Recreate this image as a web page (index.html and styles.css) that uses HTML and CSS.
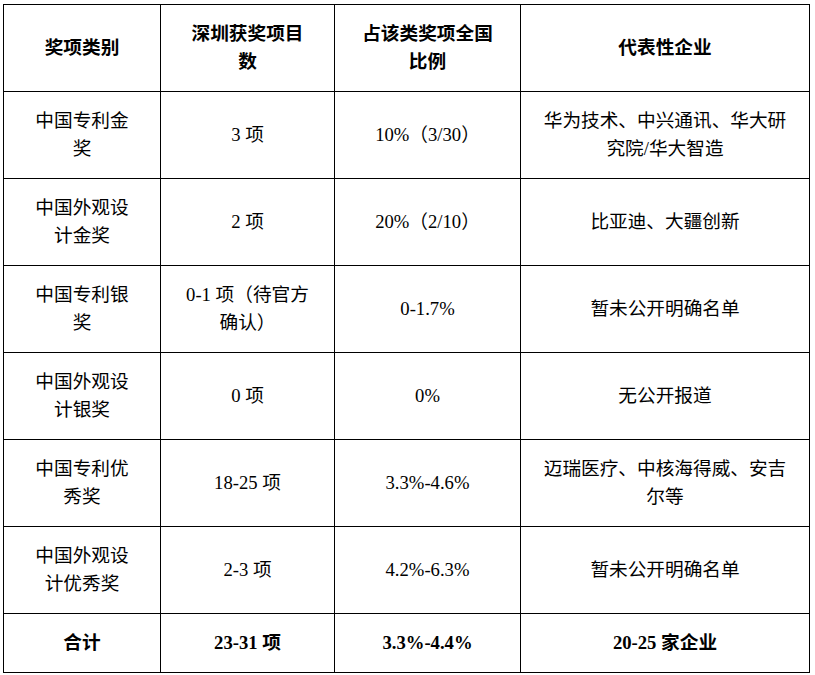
FILE: index.html
```html
<!DOCTYPE html>
<html lang="zh">
<head>
<meta charset="utf-8">
<link rel="stylesheet" href="styles.css">
</head>
<body>
<div class="page">
<table class="awards">
  <colgroup>
    <col class="c1"><col class="c2"><col class="c3"><col class="c4">
  </colgroup>
  <thead>
    <tr class="head">
      <th class="p1">奖项类别</th>
      <th class="p2">深圳获奖项目数</th>
      <th class="p3">占该类奖项全国比例</th>
      <th class="p4">代表性企业</th>
    </tr>
  </thead>
  <tbody>
    <tr>
      <td class="p1">中国专利金奖</td>
      <td class="p2">3 项</td>
      <td class="p3">10%（3/30）</td>
      <td class="p4">华为技术、中兴通讯、华大研究院/华大智造</td>
    </tr>
    <tr>
      <td class="p1">中国外观设计金奖</td>
      <td class="p2">2 项</td>
      <td class="p3">20%（2/10）</td>
      <td class="p4">比亚迪、大疆创新</td>
    </tr>
    <tr>
      <td class="p1">中国专利银奖</td>
      <td class="p2">0-1 项（待官方确认）</td>
      <td class="p3">0-1.7%</td>
      <td class="p4">暂未公开明确名单</td>
    </tr>
    <tr>
      <td class="p1">中国外观设计银奖</td>
      <td class="p2">0 项</td>
      <td class="p3">0%</td>
      <td class="p4">无公开报道</td>
    </tr>
    <tr>
      <td class="p1">中国专利优秀奖</td>
      <td class="p2">18-25 项</td>
      <td class="p3">3.3%-4.6%</td>
      <td class="p4">迈瑞医疗、中核海得威、安吉尔等</td>
    </tr>
    <tr>
      <td class="p1">中国外观设计优秀奖</td>
      <td class="p2">2-3 项</td>
      <td class="p3">4.2%-6.3%</td>
      <td class="p4">暂未公开明确名单</td>
    </tr>
    <tr class="total">
      <td class="p1">合计</td>
      <td class="p2">23-31 项</td>
      <td class="p3">3.3%-4.4%</td>
      <td class="p4">20-25 家企业</td>
    </tr>
  </tbody>
</table>
</div>
</body>
</html>
```

FILE: styles.css
```css
html, body {
  margin: 0;
  padding: 0;
  background: #ffffff;
}

.page {
  padding: 4px 0 0 3px;
}

.awards {
  border-collapse: collapse;
  table-layout: fixed;
  width: 806px;
  font-family: "Liberation Serif", "Noto Sans CJK SC", serif;
  font-size: 18.67px;
  line-height: 28.5px;
  color: #000000;
}

.c1 { width: 157px; }
.c2 { width: 174px; }
.c3 { width: 186px; }
.c4 { width: 289px; }

.awards th,
.awards td {
  border: 1px solid #000000;
  text-align: center;
  vertical-align: middle;
  padding-top: 0;
  padding-bottom: 0;
  font-weight: normal;
}

.awards tr {
  height: 87px;
}

.awards tr.total {
  height: 59px;
}

.awards .head th,
.awards .total td {
  font-weight: bold;
}

.p1 { padding-left: 25px; padding-right: 25px; }
.p2 { padding-left: 23px; padding-right: 23px; }
.p3 { padding-left: 25px; padding-right: 25px; }
.p4 { padding-left: 18px; padding-right: 18px; }
```
